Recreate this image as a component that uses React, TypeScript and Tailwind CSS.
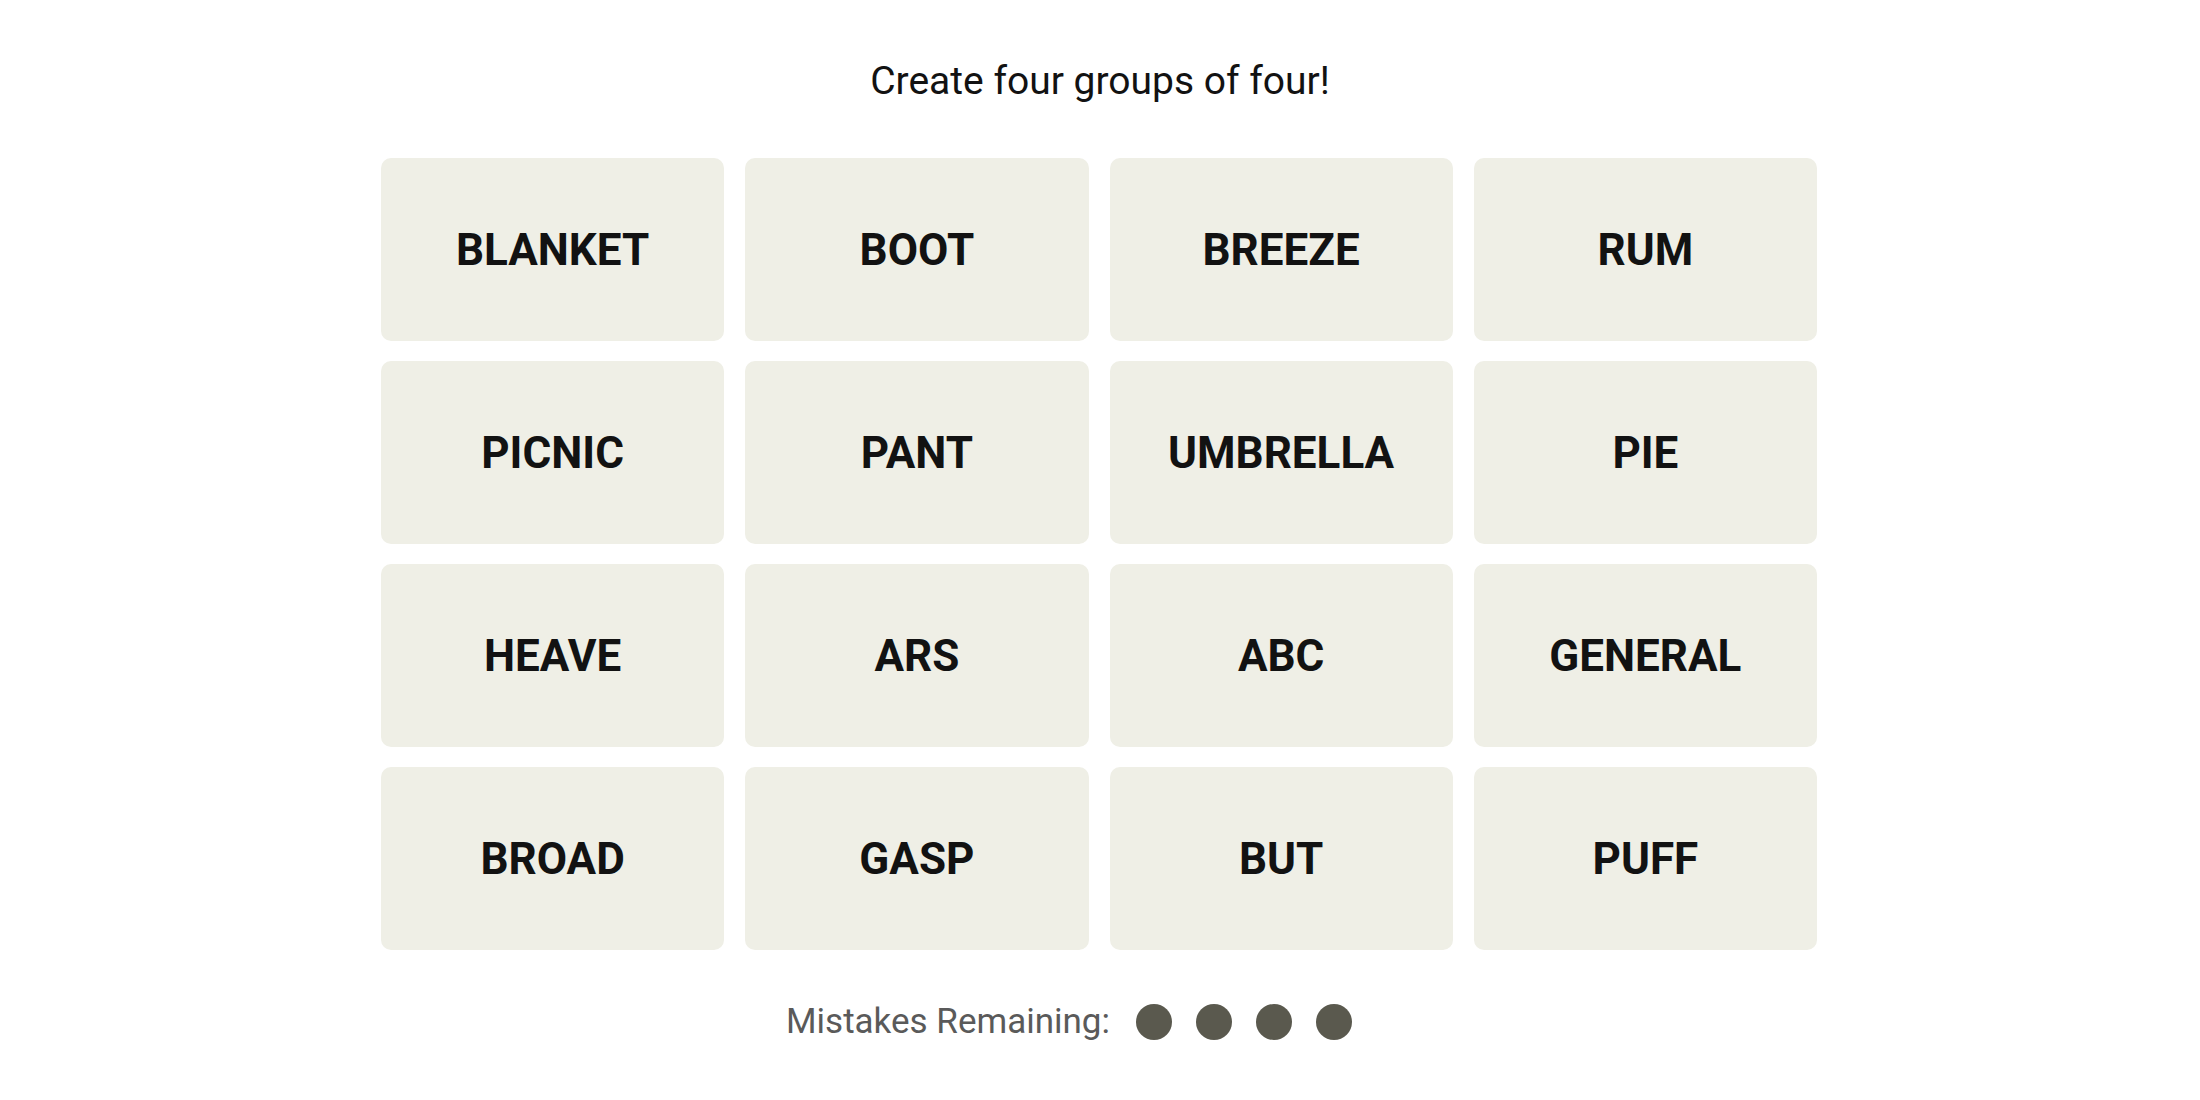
const words = [
  "BLANKET", "BOOT", "BREEZE", "RUM",
  "PICNIC", "PANT", "UMBRELLA", "PIE",
  "HEAVE", "ARS", "ABC", "GENERAL",
  "BROAD", "GASP", "BUT", "PUFF",
];

export default function App() {
  return (
    <div className="min-h-screen bg-white flex flex-col items-center pt-[52px] font-['Roboto',sans-serif]">
      <h1 className="text-[39px] leading-[58px] text-[#121212] font-normal">
        Create four groups of four!
      </h1>
      <div className="mt-[48px] grid grid-cols-4 gap-x-[21px] gap-y-[20px] w-[1436px] -ml-[2px]">
        {words.map((w) => (
          <button
            key={w}
            className="h-[183px] rounded-[10px] bg-[#efefe6] flex items-center justify-center text-[44px] font-bold text-[#121212] uppercase"
          >
            {w}
          </button>
        ))}
      </div>
      <div className="mt-[52px] mr-[62px] flex items-center h-[40px]">
        <span className="text-[35px] text-[#5a5a5a]">Mistakes Remaining:</span>
        <div className="flex items-center gap-[24px] ml-[26px]">
          {[0, 1, 2, 3].map((i) => (
            <span key={i} className="w-[36px] h-[36px] rounded-full bg-[#5a594e]" />
          ))}
        </div>
      </div>
    </div>
  );
}
